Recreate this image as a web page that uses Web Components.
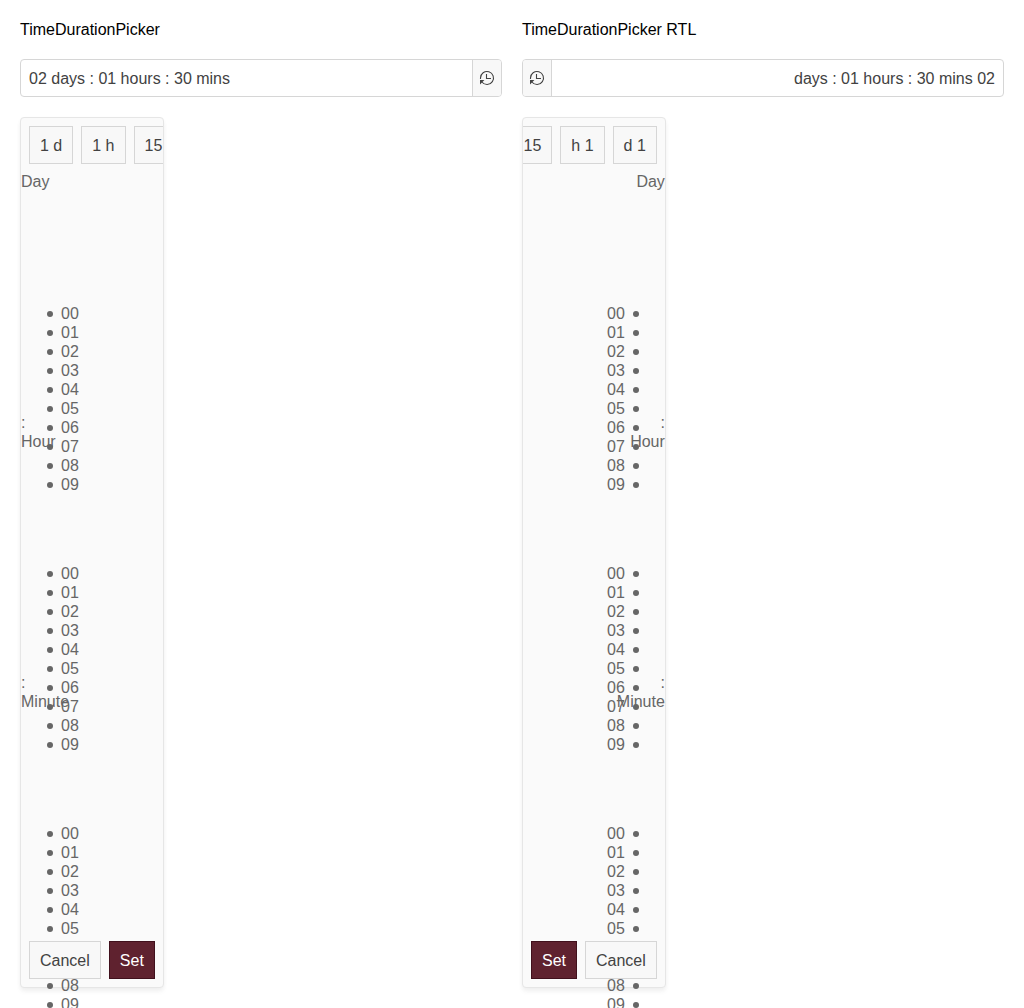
<!DOCTYPE html>
<html lang="en">
<head>
<meta charset="utf-8">
<title>TimeDurationPicker</title>
<style>
html,body{margin:0;background:#fff}
body{height:1008px;overflow:hidden;font:16px/19px "Liberation Sans",Arial,sans-serif;color:#000}
</style>
</head>
<body>
<demo-grid>
  <picker-example heading="TimeDurationPicker"></picker-example>
  <picker-example heading="TimeDurationPicker RTL" direction="rtl"></picker-example>
</demo-grid>
<script>
class Base extends HTMLElement {
  connectedCallback() {
    if (!this.shadowRoot) this.attachShadow({mode: 'open'}).innerHTML = this.render();
  }
}

customElements.define('demo-grid', class extends Base {
  render() {
    return `<style>
      :host{display:grid;grid-template-columns:1fr 1fr;gap:20px;padding:20px}
    </style><slot></slot>`;
  }
});

customElements.define('push-button', class extends Base {
  render() {
    return `<style>
      :host{display:block;box-sizing:border-box;flex:none;position:relative;z-index:1;height:38px;
        padding:8.5px 10px;border:1px solid #d6d6d6;background:#f8f8f8;color:#424242;white-space:nowrap}
      :host([primary]){background:#5f222f;border-color:#40101c;color:#fff}
    </style><slot></slot>`;
  }
});

customElements.define('duration-input', class extends Base {
  render() {
    return `<style>
      :host{display:flex;box-sizing:border-box;height:38px;border:1px solid #d6d6d6;border-radius:4px;
        overflow:hidden;background:#fff;color:#424242}
      .value{flex:1;padding:9px 8px 8px}
      .toggle{display:flex;align-items:center;justify-content:center;width:28px;
        border-inline-start:1px solid #d6d6d6;background:#f8f8f8}
      svg{display:block;width:16px;height:16px}
    </style>
    <div class="value"><slot></slot></div>
    <div class="toggle"><svg viewBox="0 0 16 16" fill="none" stroke="#424242" stroke-width="1.1">
      <path d="M1.5 9V8A6.5 6.5 0 1 1 2.9 12M7.5 4v4.5H12"/>
      <path d="M1 10h4.4L1 14.4z" fill="#424242" stroke="none"/>
    </svg></div>`;
  }
});

customElements.define('time-list', class extends Base {
  render() {
    const items = Array.from({length: 10}, (_, i) => `<li>0${i}</li>`).join('');
    return `<style>
      :host{display:block}
      .frame{box-sizing:border-box;height:222px;padding-top:113px}
      ul{margin:0;padding:0;padding-inline-start:40px;list-style:none}
      li{height:19px}
      li::before{content:"";display:inline-block;width:6px;height:6px;border-radius:50%;
        background:currentColor;margin-inline:-14px 8px;vertical-align:1.6px}
    </style>
    <div>${this.getAttribute('label')}</div>
    <div class="frame"><ul>${items}</ul></div>`;
  }
});

customElements.define('duration-popup', class extends Base {
  render() {
    return `<style>
      :host{display:block;box-sizing:border-box;width:fit-content;border:1px solid #e6e6e6;border-radius:4px;
        background:#fafafa;color:#666;box-shadow:0 2px 4px rgba(0,0,0,.03),0 4px 5px rgba(0,0,0,.04)}
      .presets{display:flex;gap:8px;padding:8px;overflow:hidden;contain:inline-size}
      .actions{display:flex;gap:8px;padding:8px}
    </style>
    <div class="presets"><push-button>1 d</push-button><push-button>1 h</push-button><push-button>15 m</push-button></div>
    <time-list label="Day"></time-list><div>:</div>
    <time-list label="Hour"></time-list><div>:</div>
    <time-list label="Minute"></time-list>
    <div class="actions"><push-button>Cancel</push-button><push-button primary>Set</push-button></div>`;
  }
});

customElements.define('picker-example', class extends Base {
  render() {
    const dir = this.getAttribute('direction') || 'ltr';
    return `<style>
      :host{display:flex;flex-direction:column;gap:20px;min-width:0}
      duration-popup{align-self:flex-start}
    </style>
    <div>${this.getAttribute('heading')}</div>
    <duration-input dir="${dir}">02 days : 01 hours : 30 mins</duration-input>
    <duration-popup dir="${dir}"></duration-popup>`;
  }
});
</script>
</body>
</html>
